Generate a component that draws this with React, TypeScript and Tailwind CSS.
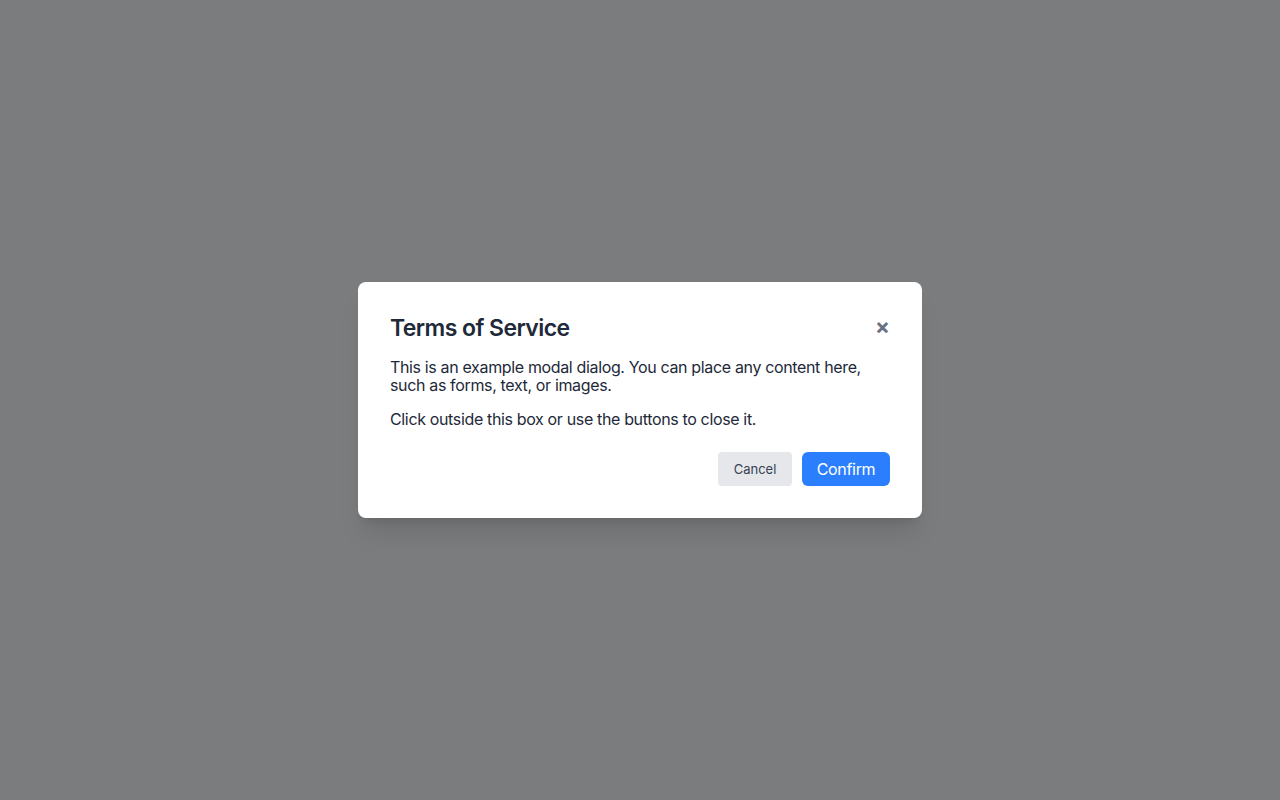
export default function App() {
  return (
    <div
      className="flex h-screen w-full items-center justify-center bg-[#7b7c7e]"
      style={{ fontFamily: "Inter, 'Noto Sans', sans-serif" }}
    >
      <div className="w-[564px] rounded-lg bg-white p-8 shadow-xl">
        <div className="flex items-center justify-between">
          <h2 className="-mt-0.5 mb-0.5 text-[23px] leading-8 font-semibold tracking-[-0.025em] text-gray-800">
            Terms of Service
          </h2>
          <button className="-mt-2 text-[22px] leading-none font-bold text-gray-500">×</button>
        </div>
        <div className="mt-3 text-base leading-[18px] tracking-[-0.022em] text-gray-800">
          <p>
            This is an example modal dialog. You can place any content here, such as forms, text,
            or images.
          </p>
          <p className="mt-4">Click outside this box or use the buttons to close it.</p>
        </div>
        <div className="mt-6 flex justify-end gap-2.5">
          <button className="h-[34px] w-[74px] rounded bg-gray-200 pt-0.5 text-[13px] text-gray-700">
            Cancel
          </button>
          <button className="h-[34px] w-[88px] rounded-md bg-blue-500 text-base tracking-[-0.02em] text-white">
            Confirm
          </button>
        </div>
      </div>
    </div>
  );
}
